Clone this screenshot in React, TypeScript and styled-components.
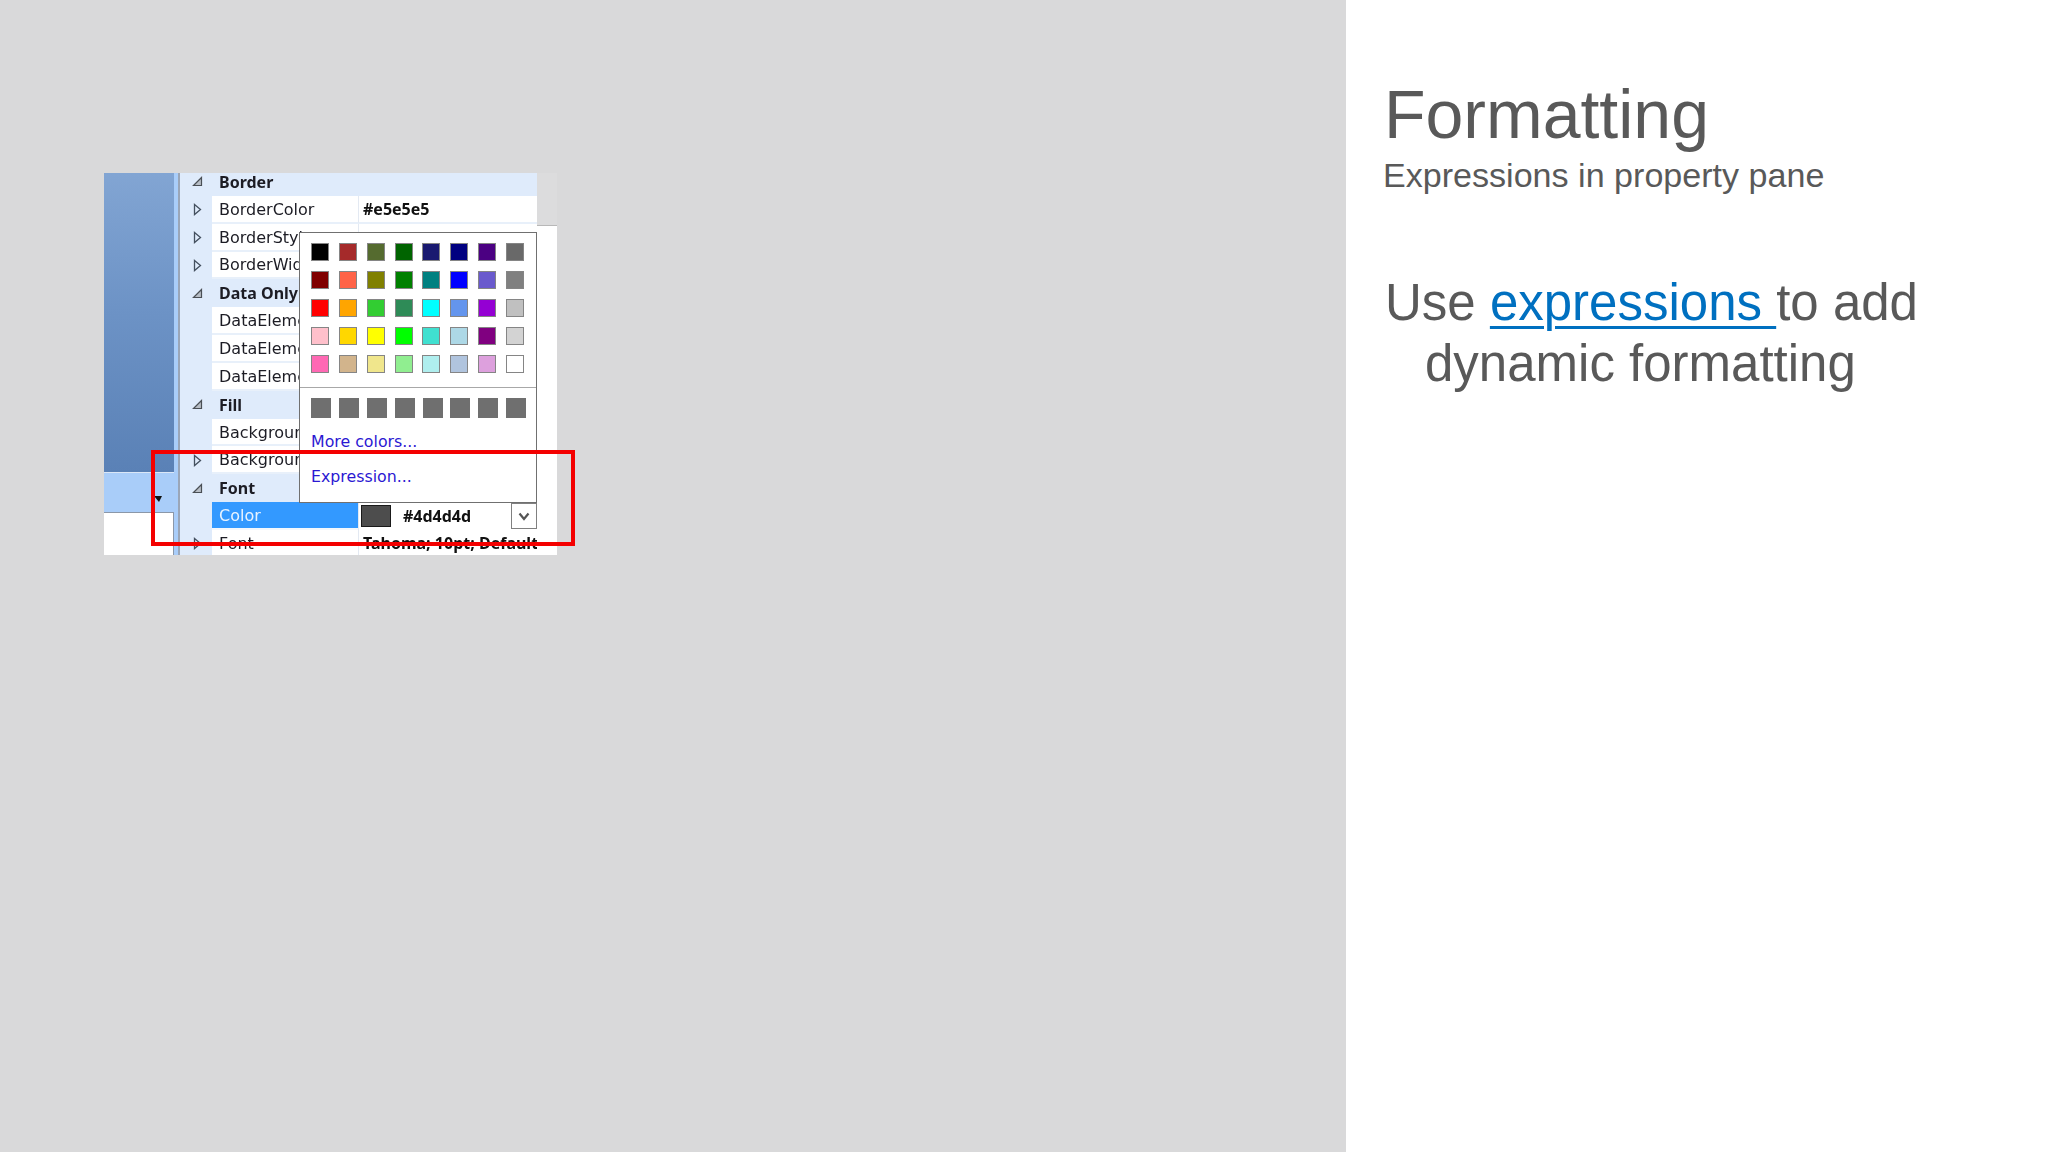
import React from "react";
import styled, { createGlobalStyle } from "styled-components";

const Global = createGlobalStyle`
  html, body { margin: 0; padding: 0; background: #fff; }
  #root { width: 2048px; height: 1152px; overflow: hidden; }
`;

const Slide = styled.div`
  display: flex;
  width: 2048px;
  height: 1152px;
  font-family: "Liberation Sans", Arial, sans-serif;
`;

const Stage = styled.div`
  width: 1346px;
  flex: none;
  background: #d9d9da;
  padding: 173px 0 0 104px;
  box-sizing: border-box;
`;

const Shot = styled.div`
  position: relative;
  display: flex;
  width: 453px;
  height: 382px;
  font-family: "DejaVu Sans", sans-serif;
  font-size: 16px;
  color: #1c1c24;
`;

const Blurred = styled.div`
  display: flex;
  width: 100%;
  height: 100%;
  filter: blur(0.45px);
`;

const Side = styled.div`
  width: 70px;
  flex: none;
  display: flex;
  flex-direction: column;
`;

const SideBlue = styled.div`
  height: 299px;
  background: linear-gradient(180deg, #82a5d3 0%, #6d93c6 45%, #5a81b6 100%);
`;

const SideTab = styled.div`
  position: relative;
  height: 40px;
  background: #a9cdf9;
  border-top: 1px solid #dbe7f7;
  box-sizing: border-box;
`;

const TabArrow = styled.div`
  position: absolute;
  right: 12px;
  top: 23px;
  width: 0;
  height: 0;
  border-left: 5px solid transparent;
  border-right: 3px solid transparent;
  border-top: 6px solid #111;
`;

const SideWhite = styled.div`
  flex: 1;
  background: #fff;
  border-top: 1px solid #8b97a8;
  border-right: 1px solid #8b97a8;
`;

const Strip = styled.div`
  width: 6px;
  flex: none;
  background: #a9cdf9;
  border-right: 2px solid #9aa6b8;
  box-sizing: border-box;
`;

const Grid = styled.div`
  width: 357px;
  flex: none;
  background: #dfebfb;
  overflow: hidden;
`;

const GridInner = styled.div`
  margin-top: -5px;
`;

const Row = styled.div`
  display: grid;
  grid-template-columns: 32px 146px 179px;
  height: 27.85px;
`;

const Gutter = styled.div`
  display: flex;
  align-items: center;
  justify-content: center;
  padding-left: 2px;
  svg { display: block; }
`;

const SectionName = styled.div`
  grid-column: 2 / 4;
  display: flex;
  align-items: center;
  padding-left: 7px;
  font-family: "Noto Sans", sans-serif;
  font-size: 16px;
  font-weight: 700;
  white-space: nowrap;
`;

const NameCell = styled.div<{ $active?: boolean }>`
  display: flex;
  align-items: center;
  padding: 1px 0 0 7px;
  overflow: hidden;
  white-space: nowrap;
  box-sizing: border-box;
  background: ${(p) => (p.$active ? "#3399ff" : "#fff")};
  color: ${(p) => (p.$active ? "#e8f3ff" : "inherit")};
  border-bottom: 2px solid ${(p) => (p.$active ? "#f4f8fd" : "#e8f0fa")};
`;

const ValueCell = styled.div`
  display: flex;
  align-items: center;
  padding: 1px 0 0 4px;
  overflow: hidden;
  white-space: nowrap;
  font-family: "Noto Sans", sans-serif;
  font-size: 16px;
  font-weight: 700;
  color: #111;
  background: #fff;
  box-sizing: border-box;
  border-left: 1px solid #e3e9f2;
  border-bottom: 2px solid #e8f0fa;
`;

const ColorValue = styled(ValueCell)`
  padding: 0 0 0 2px;
  gap: 12px;
  border-bottom: 0;
`;

const ColorChip = styled.span`
  width: 30px;
  height: 22px;
  flex: none;
  background: #4d4d4d;
  border: 1px solid #1a1a1a;
  box-sizing: border-box;
`;

const ColorText = styled.span`
  flex: 1;
`;

const DropButton = styled.span`
  width: 26px;
  height: 26px;
  flex: none;
  display: flex;
  align-items: center;
  justify-content: center;
  background: #fff;
  border: 1px solid #808080;
  box-sizing: border-box;
`;

const RightMargin = styled.div`
  flex: 1;
  display: flex;
  flex-direction: column;
`;

const RightGrey = styled.div`
  height: 52px;
  background: #dcdcdd;
  border-bottom: 1px solid #b8b8b8;
`;

const RightWhite = styled.div`
  flex: 1;
  background: #fff;
`;

const Popup = styled.div`
  position: absolute;
  left: 195px;
  top: 59px;
  width: 238px;
  height: 271px;
  background: #fff;
  border: 1.5px solid #707070;
  box-sizing: border-box;
  display: flex;
  flex-direction: column;
`;

const Palette = styled.div`
  display: grid;
  grid-template-columns: repeat(8, 18px);
  grid-auto-rows: 18px;
  gap: 10px 9.85px;
  padding: 10px 0 0 11px;
  height: 155px;
  box-sizing: border-box;
  border-bottom: 1.5px solid #a8a8a8;
`;

const Swatch = styled.div<{ $c: string }>`
  background: ${(p) => p.$c};
  border: 1.5px solid #858585;
  box-sizing: border-box;
`;

const Recent = styled.div`
  display: grid;
  grid-template-columns: repeat(8, 20px);
  column-gap: 7.9px;
  padding: 10px 0 0 11px;
`;

const RecentSwatch = styled.div`
  height: 20px;
  background: #6f6f6f;
`;

const PopupLink = styled.div<{ $top: number }>`
  margin-top: ${(p) => p.$top}px;
  padding-left: 11px;
  color: #2b18d2;
  font-size: 15.8px;
  line-height: 20px;
`;

const Redbox = styled.div`
  position: absolute;
  left: 47px;
  top: 277px;
  width: 424px;
  height: 96px;
  border: 4px solid #f40000;
  box-sizing: border-box;
`;

const Panel = styled.div`
  flex: 1;
  background: #fff;
  color: #595959;
  padding: 74px 0 0 38px;
`;

const Title = styled.h1`
  margin: 0;
  font-size: 68px;
  font-weight: 400;
  line-height: 80px;
`;

const Subtitle = styled.h2`
  margin: 0 0 0 -1px;
  font-size: 34.1px;
  font-weight: 400;
  line-height: 42px;
`;

const Body = styled.p`
  margin: 76px 0 0 1px;
  width: 560px;
  padding-left: 40px;
  text-indent: -40px;
  font-size: 51px;
  line-height: 61px;
`;

const Link = styled.span`
  color: #0070c0;
  text-decoration: underline;
  text-decoration-thickness: 3px;
  text-underline-offset: 6px;
  white-space: pre;
`;

const Collapsed = () => (
  <svg width="9" height="13" viewBox="0 0 9 13" fill="none">
    <path d="M1.5 1.5 L7.5 6.5 L1.5 11.5 Z" stroke="#44505f" strokeWidth="1.3" />
  </svg>
);

const Expanded = () => (
  <svg width="11" height="11" viewBox="0 0 11 11">
    <path d="M9.5 1.5 V9.5 H1.5 Z" fill="#b8bec6" stroke="#4a4f55" strokeWidth="1.2" />
  </svg>
);

const Chevron = () => (
  <svg width="12" height="9" viewBox="0 0 12 9" fill="none">
    <path d="M1.5 1.5 L6 7 L10.5 1.5" stroke="#555" strokeWidth="2.2" />
  </svg>
);

type Item = { kind: "section" | "prop"; name: string; value?: string };

const items: Item[] = [
  { kind: "section", name: "Border" },
  { kind: "prop", name: "BorderColor", value: "#e5e5e5" },
  { kind: "prop", name: "BorderStyle" },
  { kind: "prop", name: "BorderWidth" },
  { kind: "section", name: "Data Only" },
  { kind: "prop", name: "DataElementName" },
  { kind: "prop", name: "DataElementOutput" },
  { kind: "prop", name: "DataElementStyle" },
  { kind: "section", name: "Fill" },
  { kind: "prop", name: "BackgroundColor" },
  { kind: "prop", name: "BackgroundImage" },
  { kind: "section", name: "Font" },
];

const expandable = new Set(["BorderColor", "BorderStyle", "BorderWidth", "BackgroundImage"]);

const palette = [
  "#000000", "#a52a2a", "#556b2f", "#006400", "#191970", "#000080", "#4b0082", "#696969",
  "#800000", "#ff6347", "#808000", "#008000", "#008080", "#0000ff", "#6a5acd", "#808080",
  "#ff0000", "#ffa500", "#32cd32", "#2e8b57", "#00ffff", "#6495ed", "#9400d3", "#c0c0c0",
  "#ffc0cb", "#ffd700", "#ffff00", "#00ff00", "#40e0d0", "#add8e6", "#800080", "#d3d3d3",
  "#ff69b4", "#d2b48c", "#f0e68c", "#90ee90", "#afeeee", "#b0c4de", "#dda0dd", "#ffffff",
];

export default function App() {
  return (
    <Slide>
      <Global />
      <Stage>
        <Shot>
          <Blurred>
            <Side>
              <SideBlue />
              <SideTab>
                <TabArrow />
              </SideTab>
              <SideWhite />
            </Side>
            <Strip />
            <Grid>
              <GridInner>
                {items.map((it) =>
                  it.kind === "section" ? (
                    <Row key={it.name}>
                      <Gutter>
                        <Expanded />
                      </Gutter>
                      <SectionName>{it.name}</SectionName>
                    </Row>
                  ) : (
                    <Row key={it.name}>
                      <Gutter>{expandable.has(it.name) && <Collapsed />}</Gutter>
                      <NameCell>{it.name}</NameCell>
                      <ValueCell>{it.value}</ValueCell>
                    </Row>
                  )
                )}
                <Row>
                  <Gutter />
                  <NameCell $active>Color</NameCell>
                  <ColorValue>
                    <ColorChip />
                    <ColorText>#4d4d4d</ColorText>
                    <DropButton>
                      <Chevron />
                    </DropButton>
                  </ColorValue>
                </Row>
                <Row>
                  <Gutter>
                    <Collapsed />
                  </Gutter>
                  <NameCell>Font</NameCell>
                  <ValueCell>Tahoma; 10pt; Default</ValueCell>
                </Row>
              </GridInner>
            </Grid>
            <RightMargin>
              <RightGrey />
              <RightWhite />
            </RightMargin>
          </Blurred>
          <Popup>
            <Palette>
              {palette.map((c, i) => (
                <Swatch key={i} $c={c} />
              ))}
            </Palette>
            <Recent>
              {Array.from({ length: 8 }, (_, i) => (
                <RecentSwatch key={i} />
              ))}
            </Recent>
            <PopupLink $top={14}>More colors...</PopupLink>
            <PopupLink $top={15}>Expression...</PopupLink>
          </Popup>
          <Redbox />
        </Shot>
      </Stage>
      <Panel>
        <Title>Formatting</Title>
        <Subtitle>Expressions in property pane</Subtitle>
        <Body>
          Use <Link>expressions </Link>to add dynamic formatting
        </Body>
      </Panel>
    </Slide>
  );
}
